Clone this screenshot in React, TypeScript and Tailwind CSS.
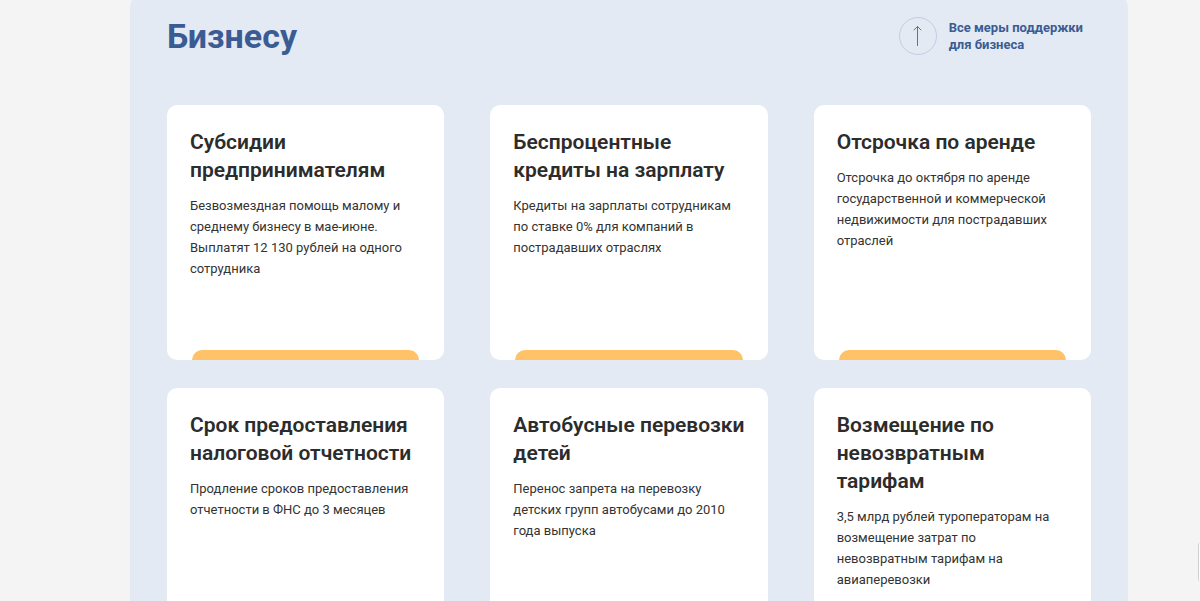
import React from "react";

const measures = [
  {
    title: "Субсидии предпринимателям",
    text: "Безвозмездная помощь малому и среднему бизнесу в мае-июне. Выплатят 12 130 рублей на одного сотрудника",
  },
  {
    title: "Беспроцентные кредиты на зарплату",
    text: "Кредиты на зарплаты сотрудникам по ставке 0% для компаний в пострадавших отраслях",
  },
  {
    title: "Отсрочка по аренде",
    text: "Отсрочка до октября по аренде государственной и коммерческой недвижимости для пострадавших отраслей",
  },
  {
    title: "Срок предоставления налоговой отчетности",
    text: "Продление сроков предоставления отчетности в ФНС до 3 месяцев",
  },
  {
    title: "Автобусные перевозки детей",
    text: "Перенос запрета на перевозку детских групп автобусами до 2010 года выпуска",
  },
  {
    title: "Возмещение по невозвратным тарифам",
    text: "3,5 млрд рублей туроператорам на возмещение затрат по невозвратным тарифам на авиаперевозки",
  },
];

const App = () => {
  return (
    <div className="min-h-screen overflow-hidden bg-[#f4f4f4] pl-[130px] pr-[72px] font-[Roboto,sans-serif]">
      <section className="-mt-2 rounded-2xl bg-[#e3eaf4] px-[37px] pt-6 pb-10">
        <header className="flex h-10 items-center justify-between">
          <h2 className="text-[34px] leading-9 font-bold text-[#3b5c92]">
            Бизнесу
          </h2>
          <a href="#all" className="flex items-center gap-3 pr-2">
            <span className="flex size-[38px] items-center justify-center rounded-full border border-[#c3cee3]">
              <svg
                width="10"
                height="22"
                viewBox="0 0 10 22"
                fill="none"
                stroke="#5874a6"
                strokeLinecap="round"
                strokeLinejoin="round"
                aria-hidden="true"
              >
                <path d="M4.5 20.5V1.5M1 5L4.5 1.5L8 5" />
              </svg>
            </span>
            <span className="text-[13px] leading-[17px] font-bold text-[#3b5c92]">
              Все меры поддержки
              <br />
              для бизнеса
            </span>
          </a>
        </header>

        <div className="mt-[49px] grid grid-cols-3 gap-x-[46px] gap-y-7">
          {measures.map((item) => (
            <article
              key={item.title}
              className="flex h-[255px] flex-col justify-between overflow-hidden rounded-[10px] bg-white"
            >
              <div className="pt-[23px] pl-[23px]">
                <h3 className="pr-5 text-[21px] leading-7 font-semibold text-[#2c2c2c]">
                  {item.title}
                </h3>
                <p className="mt-[11px] pr-6 text-[13px] leading-[21px] text-[#333333]">
                  {item.text}
                </p>
              </div>
              <div className="mx-[25px] h-[10px] shrink-0 rounded-t-[10px] bg-[#ffc268]" />
            </article>
          ))}
        </div>
      </section>

      <button
        type="button"
        aria-label="Открыть панель"
        className="fixed right-0 bottom-5 h-[38px] w-[2px] rounded-l-sm border-l border-[#cfcfcf] bg-white"
      />
    </div>
  );
};

export default App;
